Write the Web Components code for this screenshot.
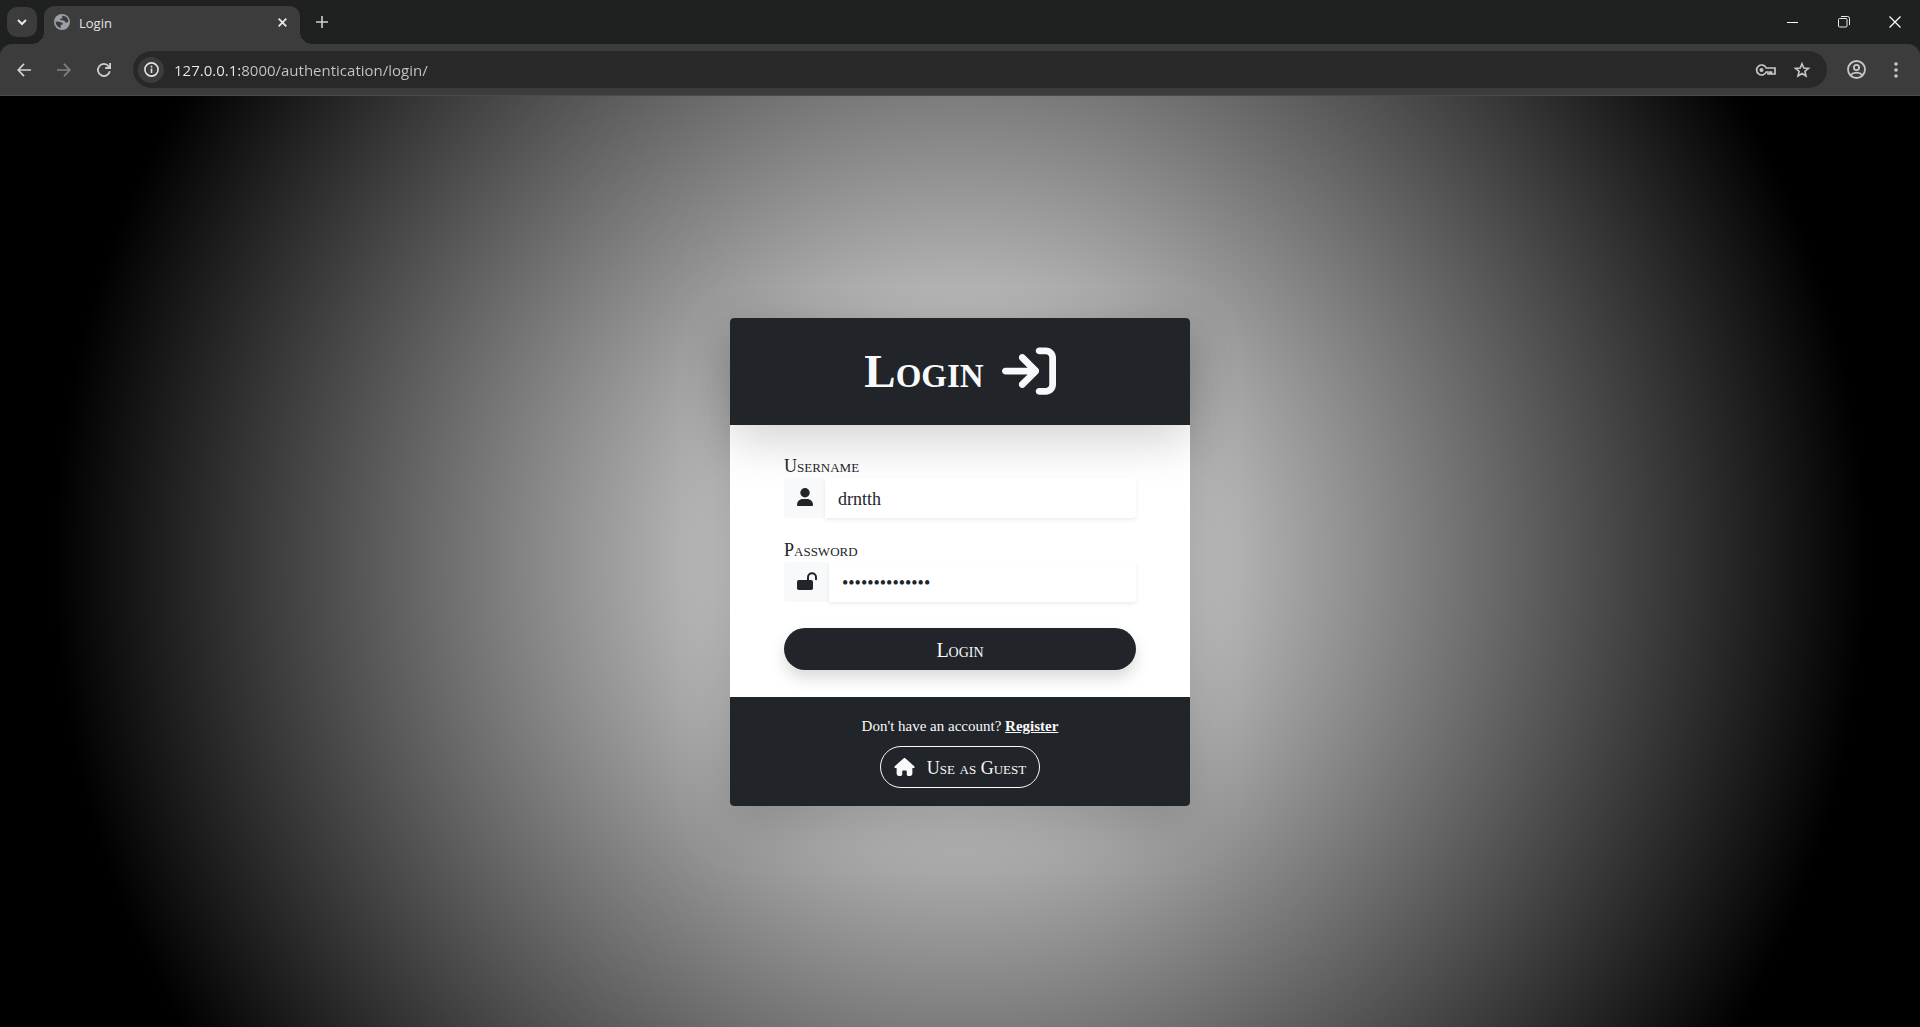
<!DOCTYPE html>
<html lang="en">
<head>
<meta charset="utf-8">
<title>Login</title>
<style>
html,body{margin:0;height:100%}
body{background:#000}
</style>
</head>
<body>
<browser-window>
  <tab-strip slot="tabs"></tab-strip>
  <nav-toolbar slot="toolbar"></nav-toolbar>
  <login-card>
    <form-field label="Username" type="text" value="drntth" name="username">
      <svg slot="icon" width="16" height="18" viewBox="0 0 16 18" fill="currentColor"><circle cx="8" cy="4.700" r="4.700"/><path d="M0 17c0-3.500 2.500-6 6-6h4c3.500 0 6 2.500 6 6q0 1-1 1H1q-1 0-1-1z"/></svg>
    </form-field>
    <form-field label="Password" type="password" value="correct-horses" name="password">
      <svg slot="icon" width="20" height="18" viewBox="0 0 20 18" fill="currentColor"><rect y="8" width="16" height="10" rx="1.800"/><path d="M11 8.500V5.200a4 4 0 0 1 8 0V7.200" fill="none" stroke="currentColor" stroke-width="2" stroke-linecap="round"/></svg>
    </form-field>
  </login-card>
</browser-window>
<script>
class BaseElement extends HTMLElement {
  connectedCallback() {
    if (this.shadowRoot) return;
    this.attachShadow({ mode: 'open' }).innerHTML =
      `<style>:host,*{box-sizing:border-box}svg{display:block;overflow:visible}button,input{font:inherit;color:inherit;background:none;border:0;margin:0;padding:0;outline:0}button{cursor:pointer}</style>` + this.render();
  }
}

customElements.define('browser-window', class extends BaseElement {
  render() { return `<style>
    :host{display:flex;flex-direction:column;min-height:100vh;background:#1f2120;font-family:"Open Sans","Noto Sans",sans-serif;color:#e3e3e3}
    main{flex:1;display:flex;align-items:center;justify-content:center;background:radial-gradient(circle,#fff,#000 85%);font-family:"Liberation Serif",serif}
  </style><slot name="tabs"></slot><slot name="toolbar"></slot><main><slot></slot></main>`; }
});

customElements.define('tab-strip', class extends BaseElement {
  render() { return `<style>
    :host{display:flex;height:44px;padding:6px 0 0 7px;font-size:13px}
    .search{display:grid;place-items:center;width:30px;height:30px;margin:1px 7px 0 0;border-radius:10px;background:#3c3c3c}
    .tab{position:relative;display:flex;align-items:center;width:256px;height:38px;padding:0 13px 6px 10px;border-radius:10px 10px 0 0;background:#3c3c3c}
    .tab::before,.tab::after{content:"";position:absolute;bottom:0;width:12px;height:12px}
    .tab::before{right:100%;background:radial-gradient(circle at 0 0,transparent 12px,#3c3c3c 12px)}
    .tab::after{left:100%;background:radial-gradient(circle at 100% 0,transparent 12px,#3c3c3c 12px)}
    .title{flex:1;padding:2px 0 0 9px;line-height:18px}
    .new{display:grid;place-items:center;width:28px;height:32px;margin-left:8px}
    .win{display:flex;margin-left:auto}
    .win button{display:grid;place-items:center;width:51px;height:32px}
  </style>
  <button class="search" aria-label="Search tabs"><svg width="10" height="7" viewBox="0 0 10 7" fill="none" stroke="#e8e8e8" stroke-width="2"><path d="M1 1l4 4 4-4"/></svg></button>
  <div class="tab">
    <svg width="16" height="16" viewBox="0 0 16 16"><circle cx="8" cy="8" r="8" fill="#9aa0a6"/><path d="M1.600 7.600l3.600.200 3.300 1.200c.5.200.6 1.100 0 1.500l-1.800.5v2.900l-1-.2c-2.500-1-4.200-3.200-4.100-6.100zM8.800 1.700c-1.300.8-.7 2.200.1 2.500l-2.600.6c-.7.4-.3 1.200.7 1.400l2.900.3c1 .2 1 2.100 2 2.300l2.400-.9c.3-3.100-1.600-5.700-5.500-6.200z" fill="#3c3c3c"/></svg>
    <span class="title">Login</span>
    <button aria-label="Close tab"><svg width="9" height="9" viewBox="0 0 9 9" stroke="#e8e8e8" stroke-width="1.800"><path d="M.7.7l7.600 7.600M8.300.7L.7 8.300"/></svg></button>
  </div>
  <button class="new" aria-label="New tab"><svg width="12" height="12" viewBox="0 0 12 12" stroke="#d0d0d0" stroke-width="1.600"><path d="M6 0v12M0 6h12"/></svg></button>
  <div class="win">
    <button aria-label="Minimize"><svg width="11" height="11" viewBox="0 0 11 11"><path d="M0 5h11v1H0z" fill="#fff"/></svg></button>
    <button aria-label="Restore"><svg width="12" height="12" viewBox="0 0 12 12" fill="none" stroke="#e8e8e8"><rect x=".5" y="2.500" width="8.500" height="8.500" rx="1"/><path d="M3 .5h6.500a2 2 0 0 1 2 2V9"/></svg></button>
    <button aria-label="Close"><svg width="12" height="12" viewBox="0 0 12 12" stroke="#fff" stroke-width="1.200"><path d="M.5.5l11 11M11.500.5l-11 11"/></svg></button>
  </div>`; }
});

customElements.define('nav-toolbar', class extends BaseElement {
  render() { return `<style>
    :host{display:flex;align-items:center;height:52px;padding:0 4px;background:#3c3c3c;border-bottom:1px solid #4c4c4c;border-radius:12px 12px 0 0}
    button{display:grid;place-items:center;width:40px;height:36px;flex:none}
    .omni{flex:1;display:flex;align-items:center;height:37px;margin:0 9px;padding:0 7px 0 5px;border-radius:19px;background:#282828}
    .info{width:26px;height:26px;border-radius:50%;background:#3c3c3c}
    input{flex:1;min-width:0;height:24px;margin-left:10px;font-size:15px;color:#c7c7c7;-webkit-text-fill-color:transparent;background:linear-gradient(90deg,#ececec 67px,#c7c7c7 67px);-webkit-background-clip:text;background-clip:text}
    .omni button:not(.info){width:36px}
  </style>
  <button aria-label="Back"><svg width="14" height="14" viewBox="0 0 14 14" fill="none" stroke="#d0d0d0" stroke-width="1.700"><path d="M14 7H1.500M7 .8L1.200 7 7 13.200"/></svg></button>
  <button aria-label="Forward"><svg width="14" height="14" viewBox="0 0 14 14" fill="none" stroke="#828282" stroke-width="1.700"><path d="M0 7h12.500M7 .8L12.800 7 7 13.200"/></svg></button>
  <button aria-label="Reload"><svg width="14" height="14" viewBox="0 0 14 14" fill="none" stroke="#d0d0d0" stroke-width="1.800"><path d="M12.800 8.200A6 6 0 1 1 11.600 3.200L13 4.800M13.100 0v5H8.200"/></svg></button>
  <div class="omni">
    <button class="info" aria-label="View site information"><svg width="15" height="15" viewBox="0 0 15 15" fill="none" stroke="#e3e3e3" stroke-width="1.600"><circle cx="7.500" cy="7.500" r="6.600"/><path d="M7.500 6.500v4.500M7.500 3.800v1.600"/></svg></button>
    <input type="text" aria-label="Address" value="127.0.0.1:8000/authentication/login/">
    <button aria-label="Passwords"><svg width="20" height="12" viewBox="0 0 20 12" fill="none" stroke="#c7c7c7" stroke-width="1.700"><path d="M10.200 4H19v6h-3.500V8h-1.500v2h-2V8h-1.800A5 5 0 1 1 10.200 4z"/><circle cx="5.500" cy="6" r="1.200" fill="#c7c7c7"/></svg></button>
    <button aria-label="Bookmark this tab"><svg width="16" height="16" viewBox="0 0 16 16" fill="none" stroke="#c7c7c7" stroke-width="1.600"><path d="M8 1.700l1.800 4.300 4.700.4-3.600 3 1.100 4.600L8 11.500 4 14l1.100-4.600-3.600-3L6.200 6z"/></svg></button>
  </div>
  <button aria-label="Profile"><svg width="19" height="19" viewBox="0 0 19 19" fill="none" stroke="#c7c7c7" stroke-width="1.800"><circle cx="9.500" cy="9.500" r="8.500"/><circle cx="9.500" cy="7.500" r="2.600"/><path d="M3.500 15.200c1.500-1.700 3.700-2.500 6-2.500s4.500.8 6 2.500"/></svg></button>
  <button aria-label="Menu"><svg width="4" height="16" viewBox="0 0 4 16" fill="#c7c7c7"><circle cx="2" cy="2" r="1.800"/><circle cx="2" cy="8" r="1.800"/><circle cx="2" cy="14" r="1.800"/></svg></button>`; }
});

customElements.define('login-card', class extends BaseElement {
  render() { return `<style>
    :host{display:block;width:100%;max-width:460px;border-radius:4px;background:#fff;color:#212529;box-shadow:0 16px 48px rgba(0,0,0,.175);font-size:18px;line-height:27px}
    header,footer{background:#212529;color:#f8f9fa}
    header{display:flex;align-items:center;justify-content:center;gap:18px;padding:24px;border-radius:4px 4px 0 0;box-shadow:0 16px 48px rgba(0,0,0,.175)}
    h1{margin:0;font-size:47px;line-height:59px;font-variant:small-caps}
    form{display:flex;flex-direction:column;gap:20px;padding:29px 54px 27px}
    .submit{height:42px;margin-top:6px;padding-top:3px;border-radius:21px;background:#212529;color:#f8f9fa;font-size:20px;font-variant:small-caps;box-shadow:0 8px 16px rgba(0,0,0,.15)}
    footer{display:flex;flex-direction:column;align-items:center;gap:8px;padding:18px 16px;border-radius:0 0 4px 4px}
    p{margin:0;font-size:15px;line-height:23px}
    a{color:inherit;font-weight:bold}
    .guest{display:flex;align-items:center;gap:12px;height:42px;padding:0 13px;border:1px solid #f8f9fa;border-radius:21px;font-variant:small-caps}
    .guest span{padding-top:3px}
  </style>
  <header><h1>Login</h1><svg width="54" height="48" viewBox="0 32 512 448" fill="currentColor"><path d="M352 96l64 0c17.700 0 32 14.300 32 32l0 256c0 17.700-14.300 32-32 32l-64 0c-17.700 0-32 14.300-32 32s14.300 32 32 32l64 0c53 0 96-43 96-96l0-256c0-53-43-96-96-96l-64 0c-17.700 0-32 14.300-32 32s14.300 32 32 32zm-9.400 182.600c12.500-12.500 12.500-32.800 0-45.300l-128-128c-12.500-12.500-32.800-12.500-45.300 0s-12.500 32.800 0 45.300L242.700 224 32 224c-17.700 0-32 14.300-32 32s14.300 32 32 32l210.700 0-73.400 73.400c-12.500 12.500-12.500 32.800 0 45.300s32.800 12.500 45.300 0l128-128z"/></svg></header>
  <form onsubmit="return false"><slot></slot><button class="submit">Login</button></form>
  <footer><p>Don't have an account? <a href="#register">Register</a></p>
  <button class="guest"><svg width="21" height="18" viewBox="0 0 576 512" fill="currentColor"><path d="M575.800 255.500c0 18-15 32.100-32 32.100l-32 0 .7 160.200c0 35-28 64.200-63 64.200H392c-22 0-40-18-40-40v-88c0-17.700-14.300-32-32-32h-64c-17.700 0-32 14.300-32 32v88c0 22-18 40-40 40h-56c-35 0-64-29-64-64V287.600H32c-18 0-32-14-32-32.100 0-9 3-17 10-24L266.400 8c7-7 15-8 22-8s15 2 21 7L564.800 231.500c8 7 12 15 11 24z"/></svg><span>Use as Guest</span></button></footer>`; }
});

customElements.define('form-field', class extends BaseElement {
  render() {
    const name = this.getAttribute('name');
    return `<style>
    :host{display:block}
    label{display:block;line-height:24px;font-variant:small-caps}
    .group{display:flex;height:40px;border-radius:4px}
    .icon{display:grid;place-items:center;padding:0 12px 2px 13px;background:#f8f9fa;border-radius:4px 0 0 4px}
    input{flex:1;min-width:0;padding:3px 13px 0;background:#fff;border-radius:0 4px 4px 0;box-shadow:0 2px 4px rgba(0,0,0,.075)}
  </style><label for="${name}">${this.getAttribute('label')}</label>
  <div class="group"><span class="icon"><slot name="icon"></slot></span><input id="${name}" name="${name}" type="${this.getAttribute('type')}" value="${this.getAttribute('value')}"></div>`; }
});
</script>
</body>
</html>
